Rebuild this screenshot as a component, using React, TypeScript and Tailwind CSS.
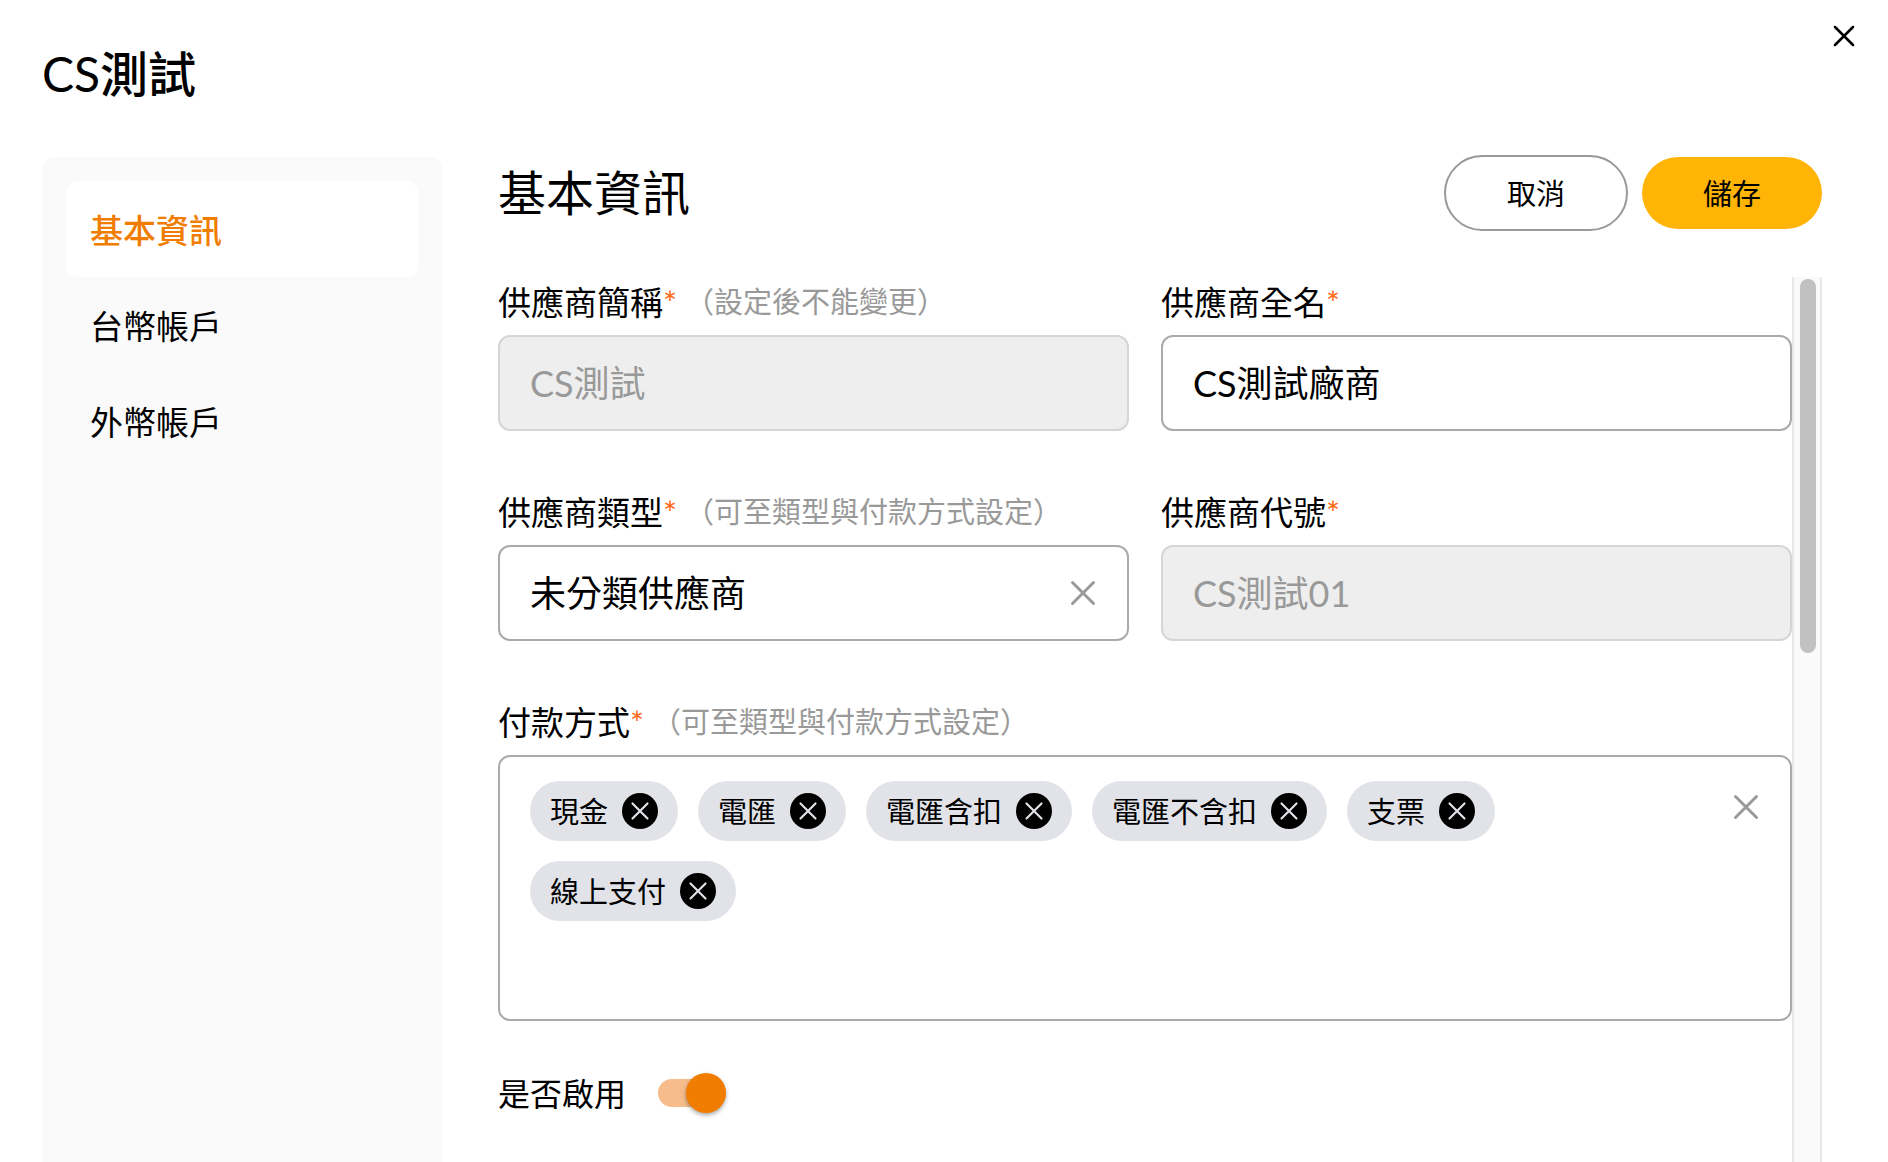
import { useState } from 'react';
import type { ReactNode } from 'react';
import clsx from 'clsx';

const tabs = ['基本資訊', '台幣帳戶', '外幣帳戶'];

const defaultMethods = ['現金', '電匯', '電匯含扣', '電匯不含扣', '支票', '線上支付'];

function CrossIcon({ className, strokeWidth }: { className: string; strokeWidth: number }) {
  return (
    <svg
      className={className}
      viewBox="0 0 28 28"
      fill="none"
      stroke="currentColor"
      strokeWidth={strokeWidth}
      strokeLinecap="round"
      aria-hidden="true"
    >
      <path d="M3.5 3.5l21 21M24.5 3.5l-21 21" />
    </svg>
  );
}

interface FieldProps {
  id: string;
  label: string;
  hint?: string;
  className?: string;
  children: ReactNode;
}

function Field({ id, label, hint, className, children }: FieldProps) {
  return (
    <div className={className}>
      <div className="flex items-center mb-2 h-[50px]">
        <label htmlFor={id} className="text-[33px] leading-[50px]">
          {label}
          <span className="text-[#ff6a13]">*</span>
        </label>
        {hint && <span className="ml-2 text-[29px] leading-[50px] text-[#999]">（{hint}）</span>}
      </div>
      {children}
    </div>
  );
}

const inputClass =
  'w-full h-24 px-[30px] pb-1 text-[36px] rounded-xl border-2 border-[#aaa] bg-white outline-none ' +
  'disabled:bg-[#eee] disabled:border-[#d5d5d5] disabled:text-[#999]';

export default function App() {
  const [tab, setTab] = useState(tabs[0]);
  const [fullName, setFullName] = useState('CS測試廠商');
  const [type, setType] = useState('未分類供應商');
  const [methods, setMethods] = useState(defaultMethods);
  const [enabled, setEnabled] = useState(true);

  return (
    <div
      lang="zh-Hant"
      className="min-h-screen flex flex-col bg-white text-black font-['Lato','Noto_Sans_CJK_TC',sans-serif]"
    >
      <header className="flex items-start justify-between h-[157px] pl-[42px] pr-5 pt-3">
        <h1 className="mt-[30px] text-[48px] leading-[64px] font-medium">
          <span className="font-normal">CS</span>測試
        </h1>
        <button type="button" aria-label="關閉" className="size-12 flex items-center justify-center">
          <CrossIcon className="size-6" strokeWidth={3} />
        </button>
      </header>

      <div className="flex flex-1 gap-14 pl-[42px] pr-[66px]">
        <nav className="w-[400px] shrink-0 p-6 rounded-t-xl bg-[#fafafa]">
          {tabs.map((name) => (
            <button
              key={name}
              type="button"
              onClick={() => setTab(name)}
              className={clsx(
                'block w-full h-24 px-6 pt-1 rounded-xl text-left text-[33px]',
                name === tab && 'bg-white text-[#f07d00] font-medium',
              )}
            >
              {name}
            </button>
          ))}
        </nav>

        <main className="flex-1 min-w-0 flex flex-col">
          <div className="flex items-center justify-between h-[72px] mb-12">
            <h2 className="text-[48px] leading-[72px]">基本資訊</h2>
            <div className="flex items-center gap-[14px]">
              <button
                type="button"
                className="w-[184px] h-[76px] pt-0.5 rounded-full border-2 border-[#999] bg-white text-[29px]"
              >
                取消
              </button>
              <button type="button" className="w-[180px] h-[72px] pt-0.5 rounded-full bg-[#ffb406] text-[29px]">
                儲存
              </button>
            </div>
          </div>

          <div className="flex flex-1">
            <form className="flex-1 min-w-0" onSubmit={(e) => e.preventDefault()}>
              <div className="grid grid-cols-2 gap-x-8 gap-y-14">
                <Field id="short-name" label="供應商簡稱" hint="設定後不能變更">
                  <input id="short-name" type="text" value="CS測試" disabled className={inputClass} />
                </Field>

                <Field id="full-name" label="供應商全名">
                  <input
                    id="full-name"
                    type="text"
                    value={fullName}
                    onChange={(e) => setFullName(e.target.value)}
                    className={inputClass}
                  />
                </Field>

                <Field id="type" label="供應商類型" hint="可至類型與付款方式設定">
                  <div className="flex items-center h-24 px-[30px] rounded-xl border-2 border-[#aaa]">
                    <input
                      id="type"
                      type="text"
                      value={type}
                      onChange={(e) => setType(e.target.value)}
                      className="flex-1 min-w-0 text-[36px] outline-none"
                    />
                    <button type="button" aria-label="清除類型" className="text-[#999]" onClick={() => setType('')}>
                      <CrossIcon className="size-7" strokeWidth={3} />
                    </button>
                  </div>
                </Field>

                <Field id="code" label="供應商代號">
                  <input id="code" type="text" value="CS測試01" disabled className={inputClass} />
                </Field>

                <Field id="methods" label="付款方式" hint="可至類型與付款方式設定" className="col-span-2">
                  <div className="flex items-start gap-20 min-h-[266px] px-[30px] py-6 rounded-xl border-2 border-[#aaa]">
                    <div className="flex-1 flex flex-wrap items-center gap-5">
                      {methods.map((m) => (
                        <span
                          key={m}
                          className="flex items-center gap-[14px] h-[60px] px-5 rounded-full bg-[#e2e3e9] text-[29px]"
                        >
                          <span className="pt-0.5">{m}</span>
                          <button
                            type="button"
                            aria-label={`移除${m}`}
                            onClick={() => setMethods(methods.filter((x) => x !== m))}
                            className="size-9 rounded-full bg-black text-[#e2e3e9] flex items-center justify-center"
                          >
                            <CrossIcon className="size-5" strokeWidth={3} />
                          </button>
                        </span>
                      ))}
                      <input id="methods" type="text" className="w-40 h-[60px] text-[29px] outline-none" />
                    </div>
                    <button
                      type="button"
                      aria-label="清除付款方式"
                      onClick={() => setMethods([])}
                      className="mt-3 text-[#999]"
                    >
                      <CrossIcon className="size-7" strokeWidth={3} />
                    </button>
                  </div>
                </Field>
              </div>

              <div className="flex items-center gap-8 mt-12 h-12">
                <label htmlFor="enabled" className="pt-0.5 text-[32px]">
                  是否啟用
                </label>
                <input
                  id="enabled"
                  type="checkbox"
                  role="switch"
                  checked={enabled}
                  onChange={(e) => setEnabled(e.target.checked)}
                  className="appearance-none flex items-center w-[68px] h-7 rounded-full bg-neutral-300
                             before:size-10 before:shrink-0 before:rounded-full before:bg-white
                             before:shadow-[0_2px_4px_rgba(0,0,0,0.35)]
                             checked:justify-end checked:bg-[#f7bc8c] checked:before:bg-[#f07d00]"
                />
              </div>
            </form>

            <div className="w-[30px] shrink-0 pt-0.5 pl-1.5 border-x-2 border-[#e8e8e8] bg-[#fafafa]">
              <div className="w-4 h-[374px] rounded-full bg-[#c1c1c1]" />
            </div>
          </div>
        </main>
      </div>
    </div>
  );
}
